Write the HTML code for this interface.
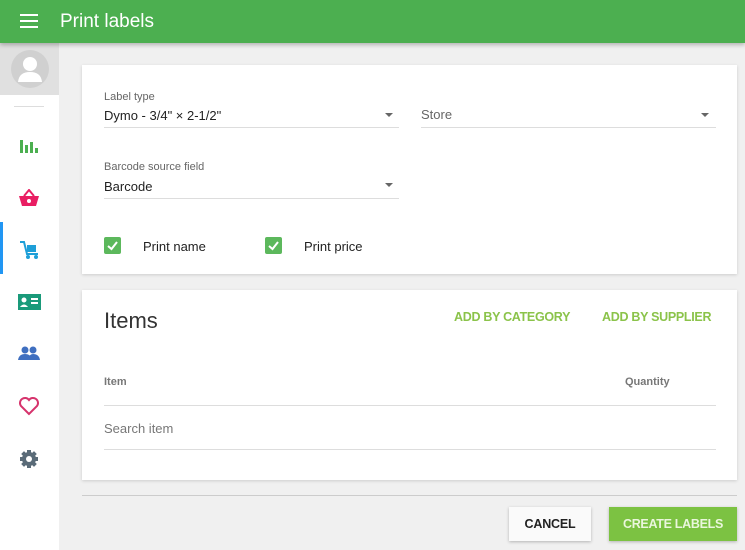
<!DOCTYPE html><html><head><style>
*{box-sizing:border-box;margin:0;padding:0}
body{width:745px;height:550px;background:#f0f0f0;font-family:"Liberation Sans",sans-serif;position:relative;overflow:hidden;color:#333}
.hdr{position:absolute;left:0;top:0;width:745px;height:43px;background:#4caf50;box-shadow:0 2px 4px rgba(0,0,0,.25);z-index:2}
.hdr .t{position:absolute;left:60px;top:11px;color:#fff;font-size:19px}
.side{position:absolute;left:0;top:43px;width:59px;height:507px;background:#fff}
.av{height:52px;background:#e0e0e0;position:relative}
.ic{position:absolute;left:18px}
.card{position:absolute;background:#fff;box-shadow:0 1px 3px rgba(0,0,0,.15)}
.lbl{position:absolute;font-size:11px;color:#666}
.val{position:absolute;font-size:13px;color:#222}
.ul{position:absolute;height:1px;background:#ddd}
.arr{position:absolute;width:0;height:0;border-left:4px solid transparent;border-right:4px solid transparent;border-top:4px solid #666}
.cb{position:absolute;width:17px;height:17px;background:#5cb85c;border-radius:2px}
.ga{position:absolute;font-size:12.5px;color:#8bc34a;font-weight:bold;letter-spacing:-0.3px}
</style></head><body>
<div class="hdr"><svg style="position:absolute;left:20px;top:14px" width="18" height="14"><rect y="0" width="18" height="2" fill="#fff"/><rect y="6" width="18" height="2" fill="#fff"/><rect y="12" width="18" height="2" fill="#fff"/></svg><div class="t">Print labels</div></div>
<div class="side">
<div class="av"><svg style="position:absolute;left:11px;top:5px" width="38" height="42"><circle cx="19" cy="21" r="19" fill="#d0d0d0"/><circle cx="19" cy="16" r="7" fill="#fff"/><path d="M7 34 Q8 24 19 24 Q30 24 31 34 Z" fill="#fff"/></svg></div>
<div style="position:absolute;left:14px;top:63px;width:30px;height:1px;background:#ddd"></div>
<svg class="ic" style="top:94px" width="22" height="18"><rect x="2" y="3" width="3" height="13" fill="#4caf50"/><rect x="7" y="8" width="3" height="8" fill="#4caf50"/><rect x="12" y="5" width="3" height="11" fill="#4caf50"/><rect x="17" y="11" width="3" height="5" fill="#4caf50"/></svg>
<svg class="ic" style="top:146px" width="22" height="18"><path d="M1 7 H21 L18 17 H4 Z" fill="#e91e63"/><path d="M6 7 L11 1 L16 7" stroke="#e91e63" stroke-width="2" fill="none"/><circle cx="11" cy="12" r="2" fill="#fff"/></svg>
<div style="position:absolute;left:0;top:179px;width:59px;height:52px;border-left:3px solid #2196f3"></div>
<svg class="ic" style="top:197px" width="22" height="20"><path d="M2 2 L6 2 L9 14 L20 14" stroke="#1e9fd8" stroke-width="2" fill="none"/><rect x="9" y="5" width="9" height="7" fill="#1e9fd8"/><circle cx="10" cy="17" r="2" fill="#1e9fd8"/><circle cx="18" cy="17" r="2" fill="#1e9fd8"/></svg>
<svg class="ic" style="top:250px" width="24" height="18"><rect x="0" y="1" width="23" height="16" fill="#1a9a7a"/><circle cx="6" cy="7" r="2.5" fill="#fff"/><path d="M2 14 Q6 9 10 14Z" fill="#fff"/><rect x="13" y="5" width="7" height="2" fill="#fff"/><rect x="13" y="9" width="7" height="2" fill="#fff"/></svg>
<svg class="ic" style="top:303px" width="22" height="16"><circle cx="7" cy="4" r="3.5" fill="#3f6fc0"/><circle cx="15" cy="4" r="3.5" fill="#3f6fc0"/><path d="M0 14 Q1 8 7 8 Q13 8 14 14Z M10 14 Q11 8 15 8 Q21 8 22 14Z" fill="#3f6fc0"/></svg>
<svg class="ic" style="top:353px" width="22" height="20"><path d="M11 18 L3 10 A4.5 4.5 0 0 1 11 4 A4.5 4.5 0 0 1 19 10 Z" stroke="#d6336c" stroke-width="2" fill="none"/></svg>
<svg class="ic" style="top:405px" width="22" height="22"><circle cx="11" cy="11" r="7" fill="#5a6b78"/><g stroke="#5a6b78" stroke-width="4"><line x1="11" y1="2" x2="11" y2="20"/><line x1="2" y1="11" x2="20" y2="11"/><line x1="4.6" y1="4.6" x2="17.4" y2="17.4"/><line x1="17.4" y1="4.6" x2="4.6" y2="17.4"/></g><circle cx="11" cy="11" r="3" fill="#fff"/></svg>
</div>
<div class="card" style="left:82px;top:65px;width:655px;height:209px">
<div class="lbl" style="left:22px;top:26px">Label type</div>
<div class="val" style="left:22px;top:43px">Dymo - 3/4" × 2-1/2"</div>
<div class="arr" style="left:303px;top:48px"></div>
<div class="ul" style="left:22px;top:62px;width:295px"></div>
<div class="val" style="left:339px;top:42px;color:#666">Store</div>
<div class="arr" style="left:619px;top:48px"></div>
<div class="ul" style="left:339px;top:62px;width:295px"></div>
<div class="lbl" style="left:22px;top:96px">Barcode source field</div>
<div class="val" style="left:22px;top:114px">Barcode</div>
<div class="arr" style="left:303px;top:118px"></div>
<div class="ul" style="left:22px;top:133px;width:295px"></div>
<div class="cb" style="left:22px;top:172px"><svg width="17" height="17"><path d="M4 9 L7.5 12 L13 5" stroke="#fff" stroke-width="2" fill="none"/></svg></div>
<div class="val" style="left:61px;top:174px">Print name</div>
<div class="cb" style="left:183px;top:172px"><svg width="17" height="17"><path d="M4 9 L7.5 12 L13 5" stroke="#fff" stroke-width="2" fill="none"/></svg></div>
<div class="val" style="left:222px;top:174px">Print price</div>
</div>
<div class="card" style="left:82px;top:290px;width:655px;height:190px">
<div style="position:absolute;left:22px;top:18px;font-size:22px;color:#333">Items</div>
<div class="ga" style="left:372px;top:20px">ADD BY CATEGORY</div>
<div class="ga" style="left:520px;top:20px">ADD BY SUPPLIER</div>
<div class="lbl" style="left:22px;top:86px;font-weight:bold;color:#777">Item</div>
<div class="lbl" style="left:543px;top:86px;font-weight:bold;color:#777">Quantity</div>
<div class="ul" style="left:22px;top:115px;width:612px"></div>
<div class="val" style="left:22px;top:131px;color:#777">Search item</div>
<div class="ul" style="left:22px;top:159px;width:612px"></div>
</div>
<div style="position:absolute;left:82px;top:495px;width:655px;height:1px;background:#ccc"></div>
<div style="position:absolute;left:509px;top:507px;width:82px;height:34px;background:#fafafa;box-shadow:0 1px 3px rgba(0,0,0,.25);font-size:12.5px;font-weight:bold;color:#222;text-align:center;line-height:34px;letter-spacing:-0.2px">CANCEL</div>
<div style="position:absolute;left:609px;top:507px;width:128px;height:34px;background:#7cc242;box-shadow:0 1px 3px rgba(0,0,0,.25);font-size:12.5px;font-weight:bold;color:#eaf6dc;text-align:center;line-height:34px;letter-spacing:-0.3px">CREATE LABELS</div>
</body></html>
